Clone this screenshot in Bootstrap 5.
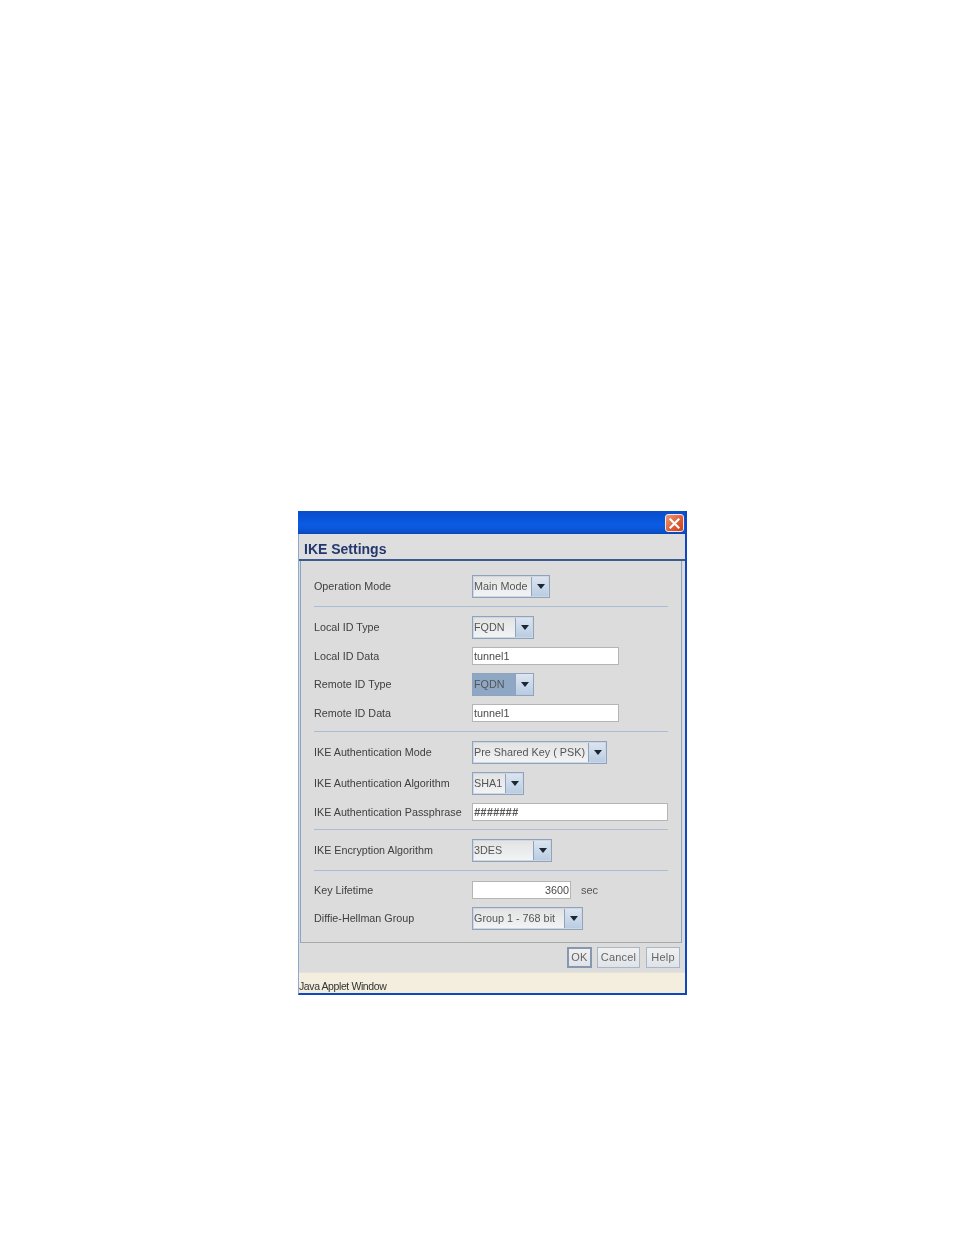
<!DOCTYPE html>
<html lang="en">
<head>
<meta charset="utf-8">
<title>IKE Settings</title>
<link href="https://cdn.jsdelivr.net/npm/bootstrap@5.3.0/dist/css/bootstrap.min.css" rel="stylesheet">
<style>
body{background:#fff;font-family:"Liberation Sans",Arial,sans-serif;font-size:11px;color:#3f3f3f;line-height:1.2}
.app-win{width:389px;height:484px;margin:511px 0 0 298px;border:solid #1046c0;border-width:0 2px 2px 1px;border-left-color:#8fa8d0;background:#dcdcdc;filter:blur(.45px)}
.app-title{height:23px;margin-left:-1px;background:linear-gradient(#0a4fc6 0,#0850d2 15%,#0a5ce4 60%,#0a52d0 88%,#0b48b0 100%);padding:3px 1px 0 0}
.app-close{width:19px;height:18px;border:1px solid #f3e6e0;border-radius:3px;background:linear-gradient(135deg,#ee9a78,#dc5a34 60%,#c8431f)}
.app-head{height:27px;border-bottom:2px solid #3a5a90;padding:8px 0 0 5px;font-size:14px;font-weight:700;color:#22386e;background:#dedede;line-height:1.1}
.app-panel{height:382px;margin:0 3px 0 1px;border:solid #8ea3bf;border-width:0 1px 1px 1px;border-bottom-color:#a8a8a8;padding:14px 13px 0 13px}
.app-lbl{width:158px;flex:none;color:#404040;font-size:10.75px}
.app-lbl.low{padding-top:1px}
.app-sep{height:1px;background:#a9bcd6;margin:0 0 1px}
.app-sep.shift{margin-top:1px}
.app-sep.tight{margin:0 0 0}
.app-combo{height:23px;border:1px solid #8fa3bd;background:linear-gradient(#e2e2e2,#f2f4f6);outline:1px solid #cfd6df;outline-offset:-2px}
.app-combo.sel{background:#8ea7c4;outline:0}
.app-combo-txt{flex:1;padding-left:1px;color:#555;white-space:nowrap;font-size:10.8px;overflow:hidden}
.app-arrow{width:18px;flex:none;height:100%;border-left:1px solid #8fa3bd;background:linear-gradient(#dde6f1,#b8cbe2)}
.app-arrow::after{content:"";border:solid transparent;border-width:5px 4.5px 0;border-top-color:#1c2733}
.cw-78{width:78px}.cw-62{width:62px}.cw-135{width:135px}.cw-52{width:52px}.cw-80{width:80px}.cw-111{width:111px}
.app-inp{height:18px;border:1px solid #b5b5b5;background:#fff;padding:0 1px;color:#4a4a4a;line-height:17px;font-size:10.8px}
.iw-147{width:147px}.iw-196{width:196px}.iw-99{width:99px}
.app-num{text-align:right}
.app-unit{margin-left:10px;color:#555;padding-top:1px}
.app-pass{font-style:italic;font-weight:700;color:#555;letter-spacing:.2px;font-size:11px}
.app-foot{height:29px;padding:4px 2px 0 0;gap:5px;margin:0 3px 0 1px}
.app-btn{height:21px;padding:0;font-size:11px;line-height:19px;color:#666;letter-spacing:.2px;border:1px solid #a9b6c6;border-radius:0;background:linear-gradient(#f0f0f0,#dfe3e8)}
.app-btn.dflt{border:2px solid #8598b0;line-height:17px}
.bw-25{width:25px}.bw-43{width:43px}.bw-34{width:34px;margin-left:1px}
.app-gapx{margin-top:2px}
.app-status{height:21px;background:#f3eedd;border-top:1px solid #e5e2d6;padding:8px 0 0 0;font-size:10.5px;color:#333;letter-spacing:-.4px;line-height:1.1}
</style>
</head>
<body>
<div class="app-win">
  <div class="app-title d-flex justify-content-end">
    <div class="app-close d-flex align-items-center justify-content-center">
      <svg width="11" height="11" viewBox="0 0 11 11"><path d="M1.5 1.5 9.5 9.5M9.5 1.5 1.5 9.5" stroke="#fff" stroke-width="2.2" stroke-linecap="square"/></svg>
    </div>
  </div>
  <div class="app-head">IKE Settings</div>
  <div class="app-panel d-flex flex-column gap-2">
    <div class="d-flex align-items-center"><div class="app-lbl">Operation Mode</div>
      <div class="app-combo d-flex align-items-center cw-78"><span class="app-combo-txt">Main Mode</span><span class="app-arrow d-flex align-items-center justify-content-center"></span></div></div>
    <div class="app-sep"></div>
    <div class="d-flex align-items-center"><div class="app-lbl">Local ID Type</div>
      <div class="app-combo d-flex align-items-center cw-62"><span class="app-combo-txt">FQDN</span><span class="app-arrow d-flex align-items-center justify-content-center"></span></div></div>
    <div class="d-flex align-items-center"><div class="app-lbl low">Local ID Data</div>
      <div class="app-inp iw-147">tunnel1</div></div>
    <div class="d-flex align-items-center"><div class="app-lbl">Remote ID Type</div>
      <div class="app-combo sel d-flex align-items-center cw-62"><span class="app-combo-txt">FQDN</span><span class="app-arrow d-flex align-items-center justify-content-center"></span></div></div>
    <div class="d-flex align-items-center"><div class="app-lbl low">Remote ID Data</div>
      <div class="app-inp iw-147">tunnel1</div></div>
    <div class="app-sep shift"></div>
    <div class="d-flex align-items-center"><div class="app-lbl">IKE Authentication Mode</div>
      <div class="app-combo d-flex align-items-center cw-135"><span class="app-combo-txt">Pre Shared Key ( PSK)</span><span class="app-arrow d-flex align-items-center justify-content-center"></span></div></div>
    <div class="d-flex align-items-center"><div class="app-lbl">IKE Authentication Algorithm</div>
      <div class="app-combo d-flex align-items-center cw-52"><span class="app-combo-txt">SHA1</span><span class="app-arrow d-flex align-items-center justify-content-center"></span></div></div>
    <div class="d-flex align-items-center"><div class="app-lbl low">IKE Authentication Passphrase</div>
      <div class="app-inp app-pass iw-196">#######</div></div>
    <div class="app-sep"></div>
    <div class="d-flex align-items-center"><div class="app-lbl">IKE Encryption Algorithm</div>
      <div class="app-combo d-flex align-items-center cw-80"><span class="app-combo-txt">3DES</span><span class="app-arrow d-flex align-items-center justify-content-center"></span></div></div>
    <div class="app-sep tight"></div>
    <div class="d-flex align-items-center app-gapx"><div class="app-lbl low">Key Lifetime</div>
      <div class="app-inp app-num iw-99">3600</div><span class="app-unit">sec</span></div>
    <div class="d-flex align-items-center"><div class="app-lbl">Diffie-Hellman Group</div>
      <div class="app-combo d-flex align-items-center cw-111"><span class="app-combo-txt">Group 1 - 768 bit</span><span class="app-arrow d-flex align-items-center justify-content-center"></span></div></div>
  </div>
  <div class="app-foot d-flex justify-content-end align-items-start">
    <button type="button" class="btn app-btn dflt bw-25">OK</button>
    <button type="button" class="btn app-btn bw-43">Cancel</button>
    <button type="button" class="btn app-btn bw-34">Help</button>
  </div>
  <div class="app-status">Java Applet Window</div>
</div>
<script src="https://cdn.jsdelivr.net/npm/bootstrap@5.3.0/dist/js/bootstrap.bundle.min.js"></script>
</body>
</html>
